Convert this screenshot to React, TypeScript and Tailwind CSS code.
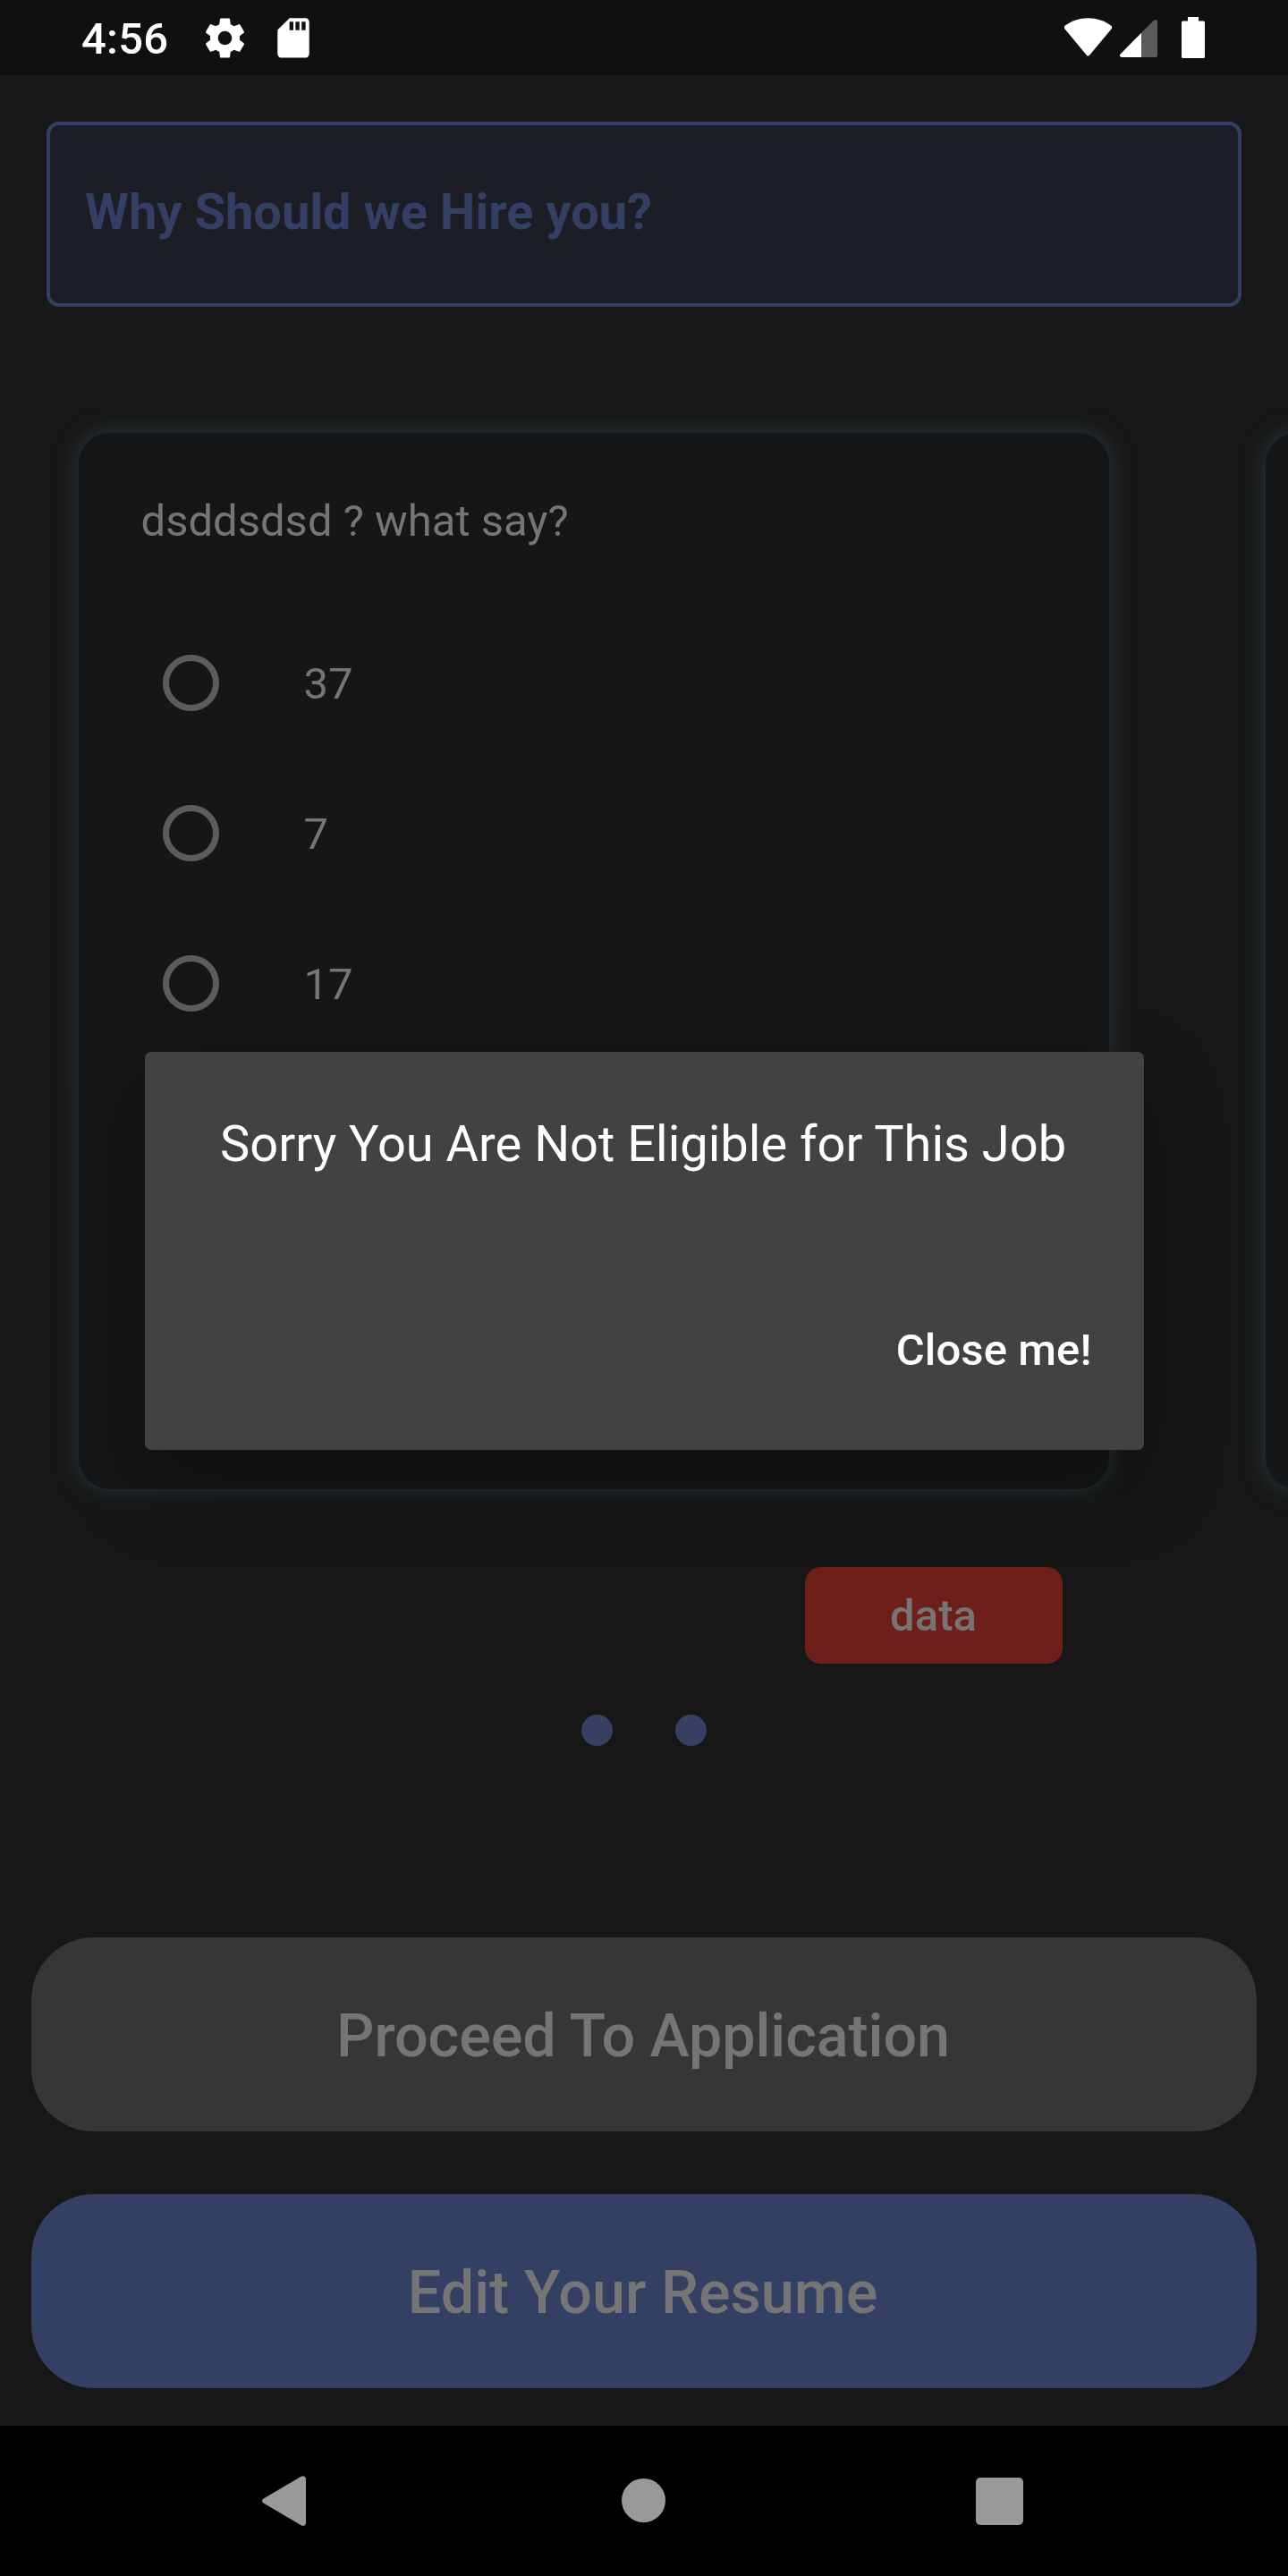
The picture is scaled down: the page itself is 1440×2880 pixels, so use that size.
import type { ReactNode } from "react";

function GearIcon() {
  return (
    <svg className="size-[53px]" viewBox="0 0 24 24" fill="#fff">
      <path d="M19.43 12.98c.04-.32.07-.64.07-.98s-.03-.66-.07-.98l2.11-1.65c.19-.15.24-.42.12-.64l-2-3.46c-.12-.22-.39-.3-.61-.22l-2.49 1c-.52-.4-1.08-.73-1.69-.98l-.38-2.65C14.46 2.18 14.25 2 14 2h-4c-.25 0-.46.18-.49.42l-.38 2.65c-.61.25-1.17.59-1.69.98l-2.49-1c-.23-.09-.49 0-.61.22l-2 3.46c-.13.22-.07.49.12.64l2.11 1.65c-.04.32-.07.65-.07.98s.03.66.07.98l-2.11 1.65c-.19.15-.24.42-.12.64l2 3.46c.12.22.39.3.61.22l2.49-1c.52.4 1.08.73 1.69.98l.38 2.65c.03.24.24.42.49.42h4c.25 0 .46-.18.49-.42l.38-2.65c.61-.25 1.17-.59 1.69-.98l2.49 1c.23.09.49 0 .61-.22l2-3.46c.12-.22.07-.49-.12-.64l-2.11-1.65zM12 15.5c-1.93 0-3.5-1.57-3.5-3.5s1.57-3.5 3.5-3.5 3.5 1.57 3.5 3.5-1.57 3.5-3.5 3.5z" />
    </svg>
  );
}

function SdCardIcon() {
  return (
    <svg className="h-[45px] w-[36px]" viewBox="0 0 36 45" fill="#fff" fillRule="evenodd">
      <path d="M13.8 0.2H31.5a4.2 4.2 0 0 1 4.2 4.2V40.2a4.2 4.2 0 0 1-4.2 4.2H4.5A4.2 4.2 0 0 1 0.3 40.2V13.6ZM13.6 4.3V13.8h4.4V4.3ZM20.4 4.3V13.8h4.4V4.3ZM27.2 4.3V13.8h4.4V4.3Z" />
    </svg>
  );
}

function WifiIcon() {
  return (
    <svg className="h-[44px] w-[54px]" viewBox="0 0 54 44" fill="#fff">
      <path d="M1 8.6C8 3.2 17 0.3 26.5 0.3S45 3.2 52 8.6c1.4 1.1 1.6 2.3 0.6 3.6L28.3 41.6c-1.1 1.3-2.5 1.3-3.6 0L0.4 12.2C-0.6 10.9-0.4 9.7 1 8.6Z" />
    </svg>
  );
}

function SignalIcon() {
  return (
    <svg className="h-[42px] w-[42px]" viewBox="0 0 42 42">
      <path d="M24 14.8 38 0.8C39.6-0.6 42 0.2 42 2.4V40a2 2 0 0 1-2 2H24Z" fill="#5a5a5a" />
      <path d="M24 14.8V42H2C0.2 42-0.8 40.2 0.6 38.6Z" fill="#fff" />
    </svg>
  );
}

function BatteryIcon() {
  return (
    <svg className="h-[46px] w-[26px]" viewBox="0 0 26 46" fill="#fff">
      <path d="M7 0H19V4.4H24.4A1.6 1.6 0 0 1 26 6V44.4A1.6 1.6 0 0 1 24.4 46H1.6A1.6 1.6 0 0 1 0 44.4V6A1.6 1.6 0 0 1 1.6 4.4H7Z" />
    </svg>
  );
}

function StatusBar() {
  return (
    <header className="flex h-[84px] shrink-0 items-center bg-[#101010] pr-[93px] pl-[91px]">
      <span className="w-[134px] pt-[3px] text-[49px] leading-none font-medium tracking-[0.2px] text-white">4:56</span>
      <GearIcon />
      <span className="ml-[32px]">
        <SdCardIcon />
      </span>
      <div className="ml-auto flex items-center">
        <span className="mb-[1px]">
          <WifiIcon />
        </span>
        <span className="mt-[2px] ml-[8px]">
          <SignalIcon />
        </span>
        <span className="ml-[27px]">
          <BatteryIcon />
        </span>
      </div>
    </header>
  );
}

function Card({ children }: { children?: ReactNode }) {
  return (
    <section className="h-[1181px] w-[1152px] shrink-0 rounded-[35px] bg-[#151618] px-[70px] pt-[70px] shadow-[0_0_25px_2px_#2a3439]">
      {children}
    </section>
  );
}

function Option({ label }: { label: string }) {
  return (
    <li className="flex h-[168px] items-center pl-[24px]">
      <span className="size-[63px] rounded-full border-[7px] border-[#5b5c5b]" />
      <span className="ml-[95px] pt-px text-[49px] leading-[57px]">{label}</span>
    </li>
  );
}

function Dialog() {
  return (
    <div
      role="dialog"
      className="absolute top-[1176px] left-[161.5px] flex h-[444.5px] w-[1117px] flex-col justify-between rounded-[7px] bg-[#424242] pt-[70px] pb-[83px] text-white shadow-[0_38px_90px_0_rgba(0,0,0,0.32)]"
    >
      <h2 className="pl-[84.5px] text-[56px] leading-[66px] font-normal whitespace-nowrap">
        Sorry You Are Not Eligible for This Job
      </h2>
      <button className="self-end pr-[58px] text-[49px] leading-[57px] font-medium tracking-[0.1px]">Close me!</button>
    </div>
  );
}

export default function App() {
  return (
    <div className="relative flex h-[2880px] w-[1440px] flex-col overflow-hidden bg-[#171717] font-[Roboto,sans-serif] text-[#757575]">
      <StatusBar />
      <main className="flex flex-1 flex-col">
        <div className="mx-[52px] mt-[52px] h-[207px] rounded-[14px] border-4 border-[#333f64] bg-[#1c1e26] pt-[64px] pl-[39px]">
          <h1 className="text-[56px] leading-[66px] font-bold text-[#333f64]">Why Should we Hire you?</h1>
        </div>

        <div className="mt-[140.5px] ml-[87.5px] flex gap-[175px]">
          <Card>
            <p className="text-[49px] leading-[57px]">dsddsdsd ? what say?</p>
            <ul className="mt-[69px]">
              <Option label="37" />
              <Option label="7" />
              <Option label="17" />
            </ul>
          </Card>
          <Card />
        </div>

        <button className="mt-[87px] ml-[900px] h-[108px] w-[288px] rounded-[17.5px] bg-[#6f1f19] pt-[2px] pr-px text-[49px] leading-none font-medium">
          data
        </button>

        <div className="mt-[57px] flex justify-center gap-[70px]">
          <span className="size-[35px] rounded-full bg-[#354063]" />
          <span className="size-[35px] rounded-full bg-[#354063]" />
        </div>

        <div className="mx-[35px] mt-[214.5px] flex flex-col gap-[70px] text-[66.5px] leading-none font-medium">
          <button className="h-[217px] rounded-[70px] bg-[#363636] pt-[3px] pr-[2px] tracking-[-0.1px]">
            Proceed To Application
          </button>
          <button className="h-[217px] rounded-[70px] bg-[#333f63] pt-[3px] pr-[3px]">Edit Your Resume</button>
        </div>
      </main>

      <nav className="flex h-[168px] shrink-0 items-center justify-between bg-black pr-[296px] pl-[293px]">
        <svg className="h-[56px] w-[49px]" viewBox="0 0 49 56" fill="#999">
          <path d="M1.6 25.4 43.6 0.7C46.2-0.7 49 0.6 49 3.6V52.4c0 3-2.8 4.3-5.4 2.9L1.6 30.6C-0.5 29.2-0.5 26.8 1.6 25.4Z" />
        </svg>
        <span className="mb-px ml-[6px] size-[49px] rounded-full bg-[#999]" />
        <span className="size-[53px] rounded-[5px] bg-[#999]" />
      </nav>

      <Dialog />
    </div>
  );
}
